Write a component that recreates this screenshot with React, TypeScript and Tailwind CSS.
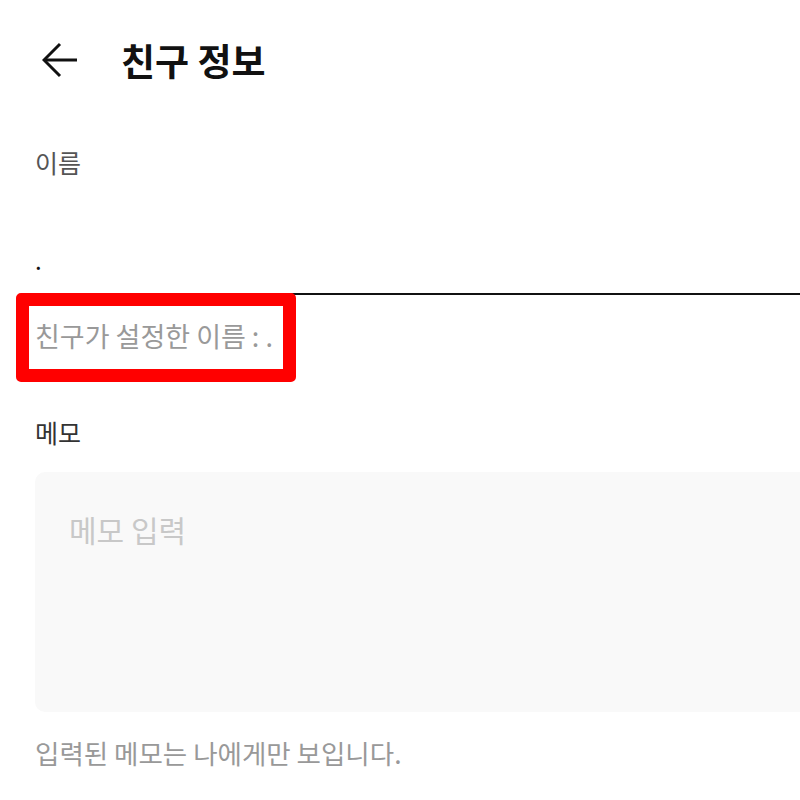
import React from "react";

export default function App() {
  return (
    <div
      className="w-[800px] h-[800px] bg-white overflow-hidden"
      style={{ fontFamily: '"Noto Sans CJK KR", "Noto Sans", sans-serif' }}
    >
      <div className="flex items-center h-[120px] pl-[42px]">
        <svg width="36" height="36" viewBox="0 0 36 36" fill="none" stroke="#111" strokeWidth="3">
          <path d="M35 18H3" />
          <path d="M18 2L2 18L18 34" />
        </svg>
        <h1 className="ml-[43px] text-[37px] font-bold text-[#111] leading-none">친구 정보</h1>
      </div>

      <div className="pl-[35px]">
        <div className="pt-[30px] text-[25px] text-[#555] leading-none">이름</div>
        <div className="mt-[72px] h-[48px] flex items-end border-b-2 border-[#111] text-[24px] text-[#111] leading-none pb-[21px]">.</div>
        <div className="relative mt-[25px] w-fit">
          <div className="text-[27px] text-[#999] leading-none pt-[2px]">친구가 설정한 이름 : .</div>
          <div className="absolute left-[-19px] top-[-27px] w-[280px] h-[89px] border-[13px] border-[#ff0000] rounded-[5px]" />
        </div>
        <div className="mt-[71px] text-[25px] text-[#333] leading-none">메모</div>
        <div className="mt-[27px] h-[240px] bg-[#f9f9f9] rounded-l-[10px] px-[34px] pt-[42px]">
          <div className="text-[30px] text-[#c8c8c8] leading-none">메모 입력</div>
        </div>
        <div className="mt-[28px] text-[26.5px] text-[#999] leading-none">입력된 메모는 나에게만 보입니다.</div>
      </div>
    </div>
  );
}
